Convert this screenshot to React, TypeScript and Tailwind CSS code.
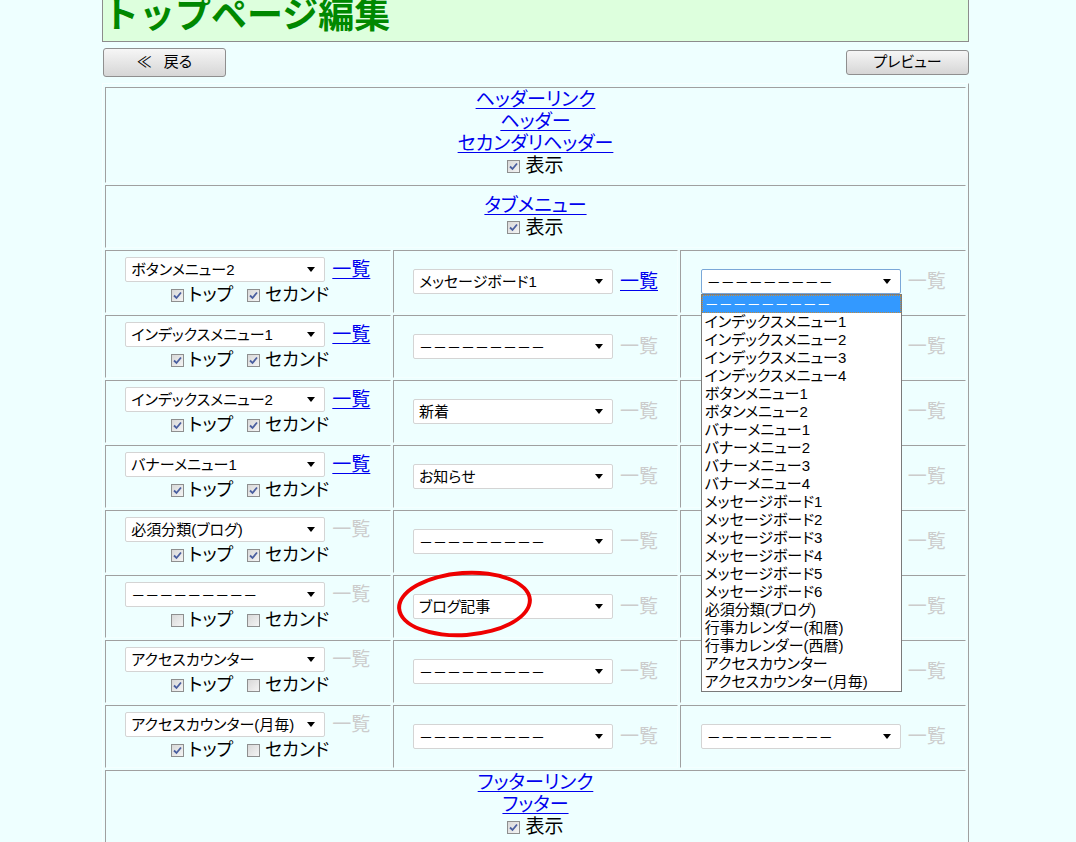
import React from "react";

const DASH = "－－－－－－－－－";

type Row = {
  a: string;
  aOn: boolean;
  top: boolean;
  sec: boolean;
  b: string;
  bOn: boolean;
  open?: boolean;
  circle?: boolean;
};

const rows: Row[] = [
  { a: "ボタンメニュー2", aOn: true, top: true, sec: true, b: "メッセージボード1", bOn: true, open: true },
  { a: "インデックスメニュー1", aOn: true, top: true, sec: true, b: DASH, bOn: false },
  { a: "インデックスメニュー2", aOn: true, top: true, sec: true, b: "新着", bOn: false },
  { a: "バナーメニュー1", aOn: true, top: true, sec: true, b: "お知らせ", bOn: false },
  { a: "必須分類(ブログ)", aOn: false, top: true, sec: true, b: DASH, bOn: false },
  { a: DASH, aOn: false, top: false, sec: false, b: "ブログ記事", bOn: false, circle: true },
  { a: "アクセスカウンター", aOn: false, top: true, sec: false, b: DASH, bOn: false },
  { a: "アクセスカウンター(月毎)", aOn: false, top: true, sec: false, b: DASH, bOn: false },
];

const listItems = [
  DASH,
  "インデックスメニュー1",
  "インデックスメニュー2",
  "インデックスメニュー3",
  "インデックスメニュー4",
  "ボタンメニュー1",
  "ボタンメニュー2",
  "バナーメニュー1",
  "バナーメニュー2",
  "バナーメニュー3",
  "バナーメニュー4",
  "メッセージボード1",
  "メッセージボード2",
  "メッセージボード3",
  "メッセージボード4",
  "メッセージボード5",
  "メッセージボード6",
  "必須分類(ブログ)",
  "行事カレンダー(和暦)",
  "行事カレンダー(西暦)",
  "アクセスカウンター",
  "アクセスカウンター(月毎)",
];

const cell =
  "border border-t-[#a0a0a0] border-l-[#a0a0a0] border-b-[#f4ffff] border-r-[#f4ffff]";

function Check({ on }: { on: boolean }) {
  return (
    <span className="inline-flex h-[13px] w-[13px] shrink-0 items-center justify-center border border-[#8e8f8f] bg-gradient-to-br from-[#d8d8d8] to-[#f4f4f4]">
      {on && (
        <svg width="9" height="9" viewBox="0 0 9 9">
          <path d="M1 4.5 L3.5 7 L8 1.5" fill="none" stroke="#4a5fa0" strokeWidth="1.8" />
        </svg>
      )}
    </span>
  );
}

// 選択肢のテキスト（ダッシュだけ少し小さく）
function OptText({ value }: { value: string }) {
  return <span className={value === DASH ? "text-[14px]" : ""}>{value}</span>;
}

function Select({ value, focus, children }: { value: string; focus?: boolean; children?: React.ReactNode }) {
  return (
    <div
      className={`relative flex h-[25px] w-[200px] shrink-0 items-center rounded-[2px] border bg-white pl-[5px] text-[15px] leading-[20px] ${
        focus ? "border-[#7aa7d8]" : "border-[#d4d4d4]"
      }`}
    >
      <span className="flex-1 truncate whitespace-nowrap">
        <OptText value={value} />
      </span>
      <svg className="mr-[9px]" width="8" height="5" viewBox="0 0 8 5">
        <path d="M0 0 H8 L4 5 Z" fill="#000" />
      </svg>
      {children}
    </div>
  );
}

function Link({ on, text = "一覧" }: { on: boolean; text?: string }) {
  return on ? (
    <span className="text-[19px] leading-[22px] text-[#0000ee] underline underline-offset-2">{text}</span>
  ) : (
    <span className="text-[19px] leading-[22px] text-[#cccccc]">{text}</span>
  );
}

function Show() {
  return (
    <div className="flex items-center gap-[5px] text-[19px] leading-[22px]">
      <Check on />
      <span>表示</span>
    </div>
  );
}

export default function App() {
  return (
    <div className="min-h-screen overflow-hidden bg-[#eeffff] font-['Liberation_Sans','Noto_Sans_CJK_JP',sans-serif] text-black [font-feature-settings:'palt']">
      <div className="ml-[102px] w-[867px]">
        {/* header */}
        <div className="-mt-[3px] h-[45px] border border-[#8c8c8c] bg-[#ddffdd]">
          <h1 className="text-[36px] leading-[36px] font-bold text-[#008800] [font-feature-settings:normal]">
            トップページ編集
          </h1>
        </div>

        {/* buttons */}
        <div className="mt-[6px] flex items-start justify-between">
          <button className="ml-[1px] flex h-[29px] w-[123px] items-center justify-center gap-[12px] rounded-[3px] border border-[#8f8f8f] bg-gradient-to-b from-[#f6f6f6] to-[#d6d6d6] text-[15px]">
            <span>≪</span>
            <span>戻る</span>
          </button>
          <button className="mt-[2px] flex h-[25px] w-[123px] items-center justify-center rounded-[3px] border border-[#8f8f8f] bg-gradient-to-b from-[#f6f6f6] to-[#d6d6d6] text-[15px]">
            プレビュー
          </button>
        </div>

        {/* table */}
        <div className="mt-[6px] border border-t-[#f8ffff] border-l-[#f8ffff] border-r-[#a0a0a0] border-b-[#a0a0a0] px-[2px] pt-[3px] pb-[2px]">
          <div className="grid grid-cols-3 gap-[2px]">
            <div className={`${cell} col-span-3 flex h-[96px] flex-col items-center pt-[1px]`}>
              <Link on text="ヘッダーリンク" />
              <Link on text="ヘッダー" />
              <Link on text="セカンダリヘッダー" />
              <Show />
            </div>
            <div className={`${cell} col-span-3 flex h-[63px] flex-col items-center justify-center`}>
              <Link on text="タブメニュー" />
              <Show />
            </div>

            {rows.map((r, i) => (
              <React.Fragment key={i}>
                <div className={`${cell} flex h-[63px] flex-col items-center justify-center`}>
                  <div className="flex items-center gap-[7px]">
                    <Select value={r.a} />
                    <Link on={r.aOn} />
                  </div>
                  <div className="mt-[2px] ml-[4px] flex items-center text-[18px] leading-[22px]">
                    <Check on={r.top} />
                    <span className="ml-[5px]">トップ</span>
                    <span className="ml-[14px] flex">
                      <Check on={r.sec} />
                    </span>
                    <span className="ml-[5px]">セカンド</span>
                  </div>
                </div>
                <div className={`${cell} relative flex h-[63px] items-center justify-center gap-[7px]`}>
                  <Select value={r.b} />
                  <Link on={r.bOn} />
                  {r.circle && (
                    <div className="pointer-events-none absolute left-[3px] top-[-5px] z-10 h-[66px] w-[135px] rotate-[-4deg] rounded-[50%] border-[4px] border-[#ee0000]" />
                  )}
                </div>
                <div className={`${cell} flex h-[63px] items-center justify-center gap-[7px]`}>
                  <Select value={DASH} focus={r.open}>
                    {r.open && (
                      <div className="absolute left-[-1px] top-[24px] z-20 w-[201px] border border-[#7a7a7a] bg-white text-[15px]">
                        {listItems.map((t, k) => (
                          <div
                            key={k}
                            className={`h-[18px] whitespace-nowrap pl-[3px] leading-[18px] ${
                              k === 0 ? "bg-[#3399ff] text-white outline-1 -outline-offset-1 outline-dotted outline-[#c08a3e]" : ""
                            }`}
                          >
                            <OptText value={t} />
                          </div>
                        ))}
                      </div>
                    )}
                  </Select>
                  <Link on={false} />
                </div>
              </React.Fragment>
            ))}

            <div className={`${cell} col-span-3 flex h-[96px] flex-col items-center pt-[1px]`}>
              <Link on text="フッターリンク" />
              <Link on text="フッター" />
              <Show />
            </div>
          </div>
        </div>
      </div>
    </div>
  );
}
